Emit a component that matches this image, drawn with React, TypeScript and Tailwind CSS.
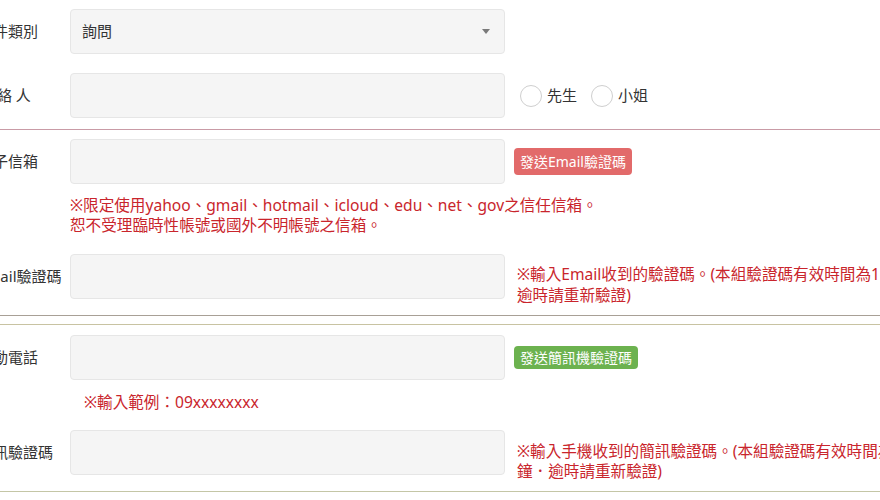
import type { ReactNode } from "react";

const font = { fontFamily: '"Noto Sans", "Noto Sans CJK TC", sans-serif' };

function Label({ children }: { children: ReactNode }) {
  return (
    <div className="flex h-[45px] w-[92px] shrink-0 items-center text-[15px] text-[#333]">
      {children}
    </div>
  );
}

function Field({ children }: { children?: ReactNode }) {
  return (
    <div className="flex h-[45px] w-[435px] shrink-0 items-center rounded border border-[#e6e6e6] bg-[#f5f5f5] px-[11px] text-[15px] text-[#333]">
      {children}
    </div>
  );
}

function Radio({ label }: { label: string }) {
  return (
    <label className="flex items-center gap-[5px] text-[15px] text-[#333]">
      <span className="h-[22px] w-[22px] rounded-full border border-[#cfcfcf] bg-white" />
      {label}
    </label>
  );
}

export default function App() {
  return (
    <div className="h-[500px] w-[880px] overflow-hidden bg-white" style={font}>
      <div className="ml-[-22px] w-[1000px]">
        {/* basic info */}
        <div className="border-b border-[#c99ba6] pb-[11px] pt-[9px]">
          <div className="flex">
            <Label>案件類別</Label>
            <Field>
              <span className="flex-1">詢問</span>
              <span className="mr-[3px] h-0 w-0 border-x-[4px] border-t-[5px] border-x-transparent border-t-[#7a7a7a]" />
            </Field>
          </div>
          <div className="mt-[19px] flex items-center">
            <Label>聯 絡 人</Label>
            <Field />
            <div className="ml-[15px] flex items-center gap-[14px]">
              <Radio label="先生" />
              <Radio label="小姐" />
            </div>
          </div>
        </div>

        {/* email */}
        <div className="border-b border-[#a8a096] pb-[9px] pt-[9px]">
          <div className="flex items-center">
            <Label>電子信箱</Label>
            <Field />
            <button className="ml-[9px] h-[27px] rounded bg-[#e26a6a] px-[6px] text-[14px] leading-none text-white">
              發送Email驗證碼
            </button>
          </div>
          <p className="ml-[92px] mt-[11px] text-[15.6px] leading-[20px] text-[#c9252c]">
            ※限定使用yahoo、gmail、hotmail、icloud、edu、net、gov之信任信箱。
            <br />
            恕不受理臨時性帳號或國外不明帳號之信箱。
          </p>
          <div className="mt-[19px] flex items-start">
            <Label>Email驗證碼</Label>
            <Field />
            <p className="ml-[12px] mt-[10px] whitespace-nowrap text-[15.6px] leading-[21px] text-[#c9252c]">
              ※輸入Email收到的驗證碼。(本組驗證碼有效時間為10分鐘，
              <br />
              逾時請重新驗證)
            </p>
          </div>
        </div>

        {/* mobile */}
        <div className="mt-[8px] border-b border-t border-b-[#c4c6a6] border-t-[#c8c3a2] pb-[10px] pt-[10px]">
          <div className="flex items-center">
            <Label>行動電話</Label>
            <Field />
            <button className="ml-[9px] h-[23px] rounded bg-[#6cb24f] px-[6px] text-[14px] leading-none text-white">
              發送簡訊機驗證碼
            </button>
          </div>
          <p className="ml-[106px] mt-[12px] text-[15.6px] leading-[20px] text-[#c9252c]">
            ※輸入範例：09xxxxxxxx
          </p>
          <div className="mt-[18px] flex items-start">
            <Label>簡訊驗證碼</Label>
            <Field />
            <p className="ml-[12px] mt-[11px] whitespace-nowrap text-[15.6px] leading-[20px] text-[#c9252c]">
              ※輸入手機收到的簡訊驗證碼。(本組驗證碼有效時間為10分
              <br />
              鐘．逾時請重新驗證)
            </p>
          </div>
        </div>
      </div>
    </div>
  );
}
